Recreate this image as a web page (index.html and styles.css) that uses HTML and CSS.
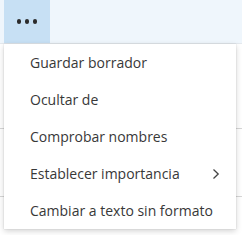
FILE: index.html
```html
<!DOCTYPE html>
<html>
<head>
<meta charset="utf-8">
<link rel="stylesheet" href="styles.css">
</head>
<body>
<div class="page">
  <div class="topbar">
    <div class="more-btn">
      <span class="dot"></span><span class="dot"></span><span class="dot"></span>
    </div>
  </div>
  <div class="content">
    <div class="bg-line l1"></div>
    <div class="bg-line l2"></div>
    <ul class="menu">
      <li class="item">Guardar borrador</li>
      <li class="item">Ocultar de</li>
      <li class="item">Comprobar nombres</li>
      <li class="item has-sub">Establecer importancia
        <svg class="chev" width="8" height="12" viewBox="0 0 8 12"><path d="M1.5 1.5 L6.2 6 L1.5 10.5" fill="none" stroke="#444" stroke-width="1.3"/></svg>
      </li>
      <li class="item">Cambiar a texto sin formato</li>
    </ul>
  </div>
</div>
</body>
</html>
```
FILE: styles.css
```css
html, body {
  margin: 0;
  padding: 0;
  background: #ffffff;
}
.page {
  width: 242px;
  height: 235px;
  overflow: hidden;
  font-family: "Open Sans", "Noto Sans", sans-serif;
}
.topbar {
  height: 43px;
  background: #eff6fc;
  border-bottom: 1px solid #e4e9ee;
  padding-left: 4px;
  display: flex;
}
.more-btn {
  width: 46px;
  height: 43px;
  background: #c7e0f4;
  display: flex;
  align-items: center;
  justify-content: center;
  gap: 3.5px;
}
.dot {
  width: 4.5px;
  height: 4.5px;
  border-radius: 50%;
  background: #2b2b2b;
}
.content {
  position: relative;
  height: 191px;
}
.bg-line {
  position: absolute;
  left: 0;
  right: 0;
  height: 1px;
  background: #d6d6d6;
}
.l1 { top: 84px; }
.l2 { top: 152px; }
.menu {
  position: absolute;
  left: 4px;
  top: 0;
  width: 232px;
  margin: 0;
  padding: 0;
  list-style: none;
  background: #fff;
  box-shadow: 0 2px 6px rgba(0,0,0,0.18), 0 0 1px rgba(0,0,0,0.2);
}
.item {
  height: 37px;
  display: flex;
  align-items: center;
  padding-left: 26px;
  padding-right: 16px;
  font-size: 14px;
  color: #383838;
  white-space: nowrap;
}
.has-sub {
  justify-content: space-between;
}
```
